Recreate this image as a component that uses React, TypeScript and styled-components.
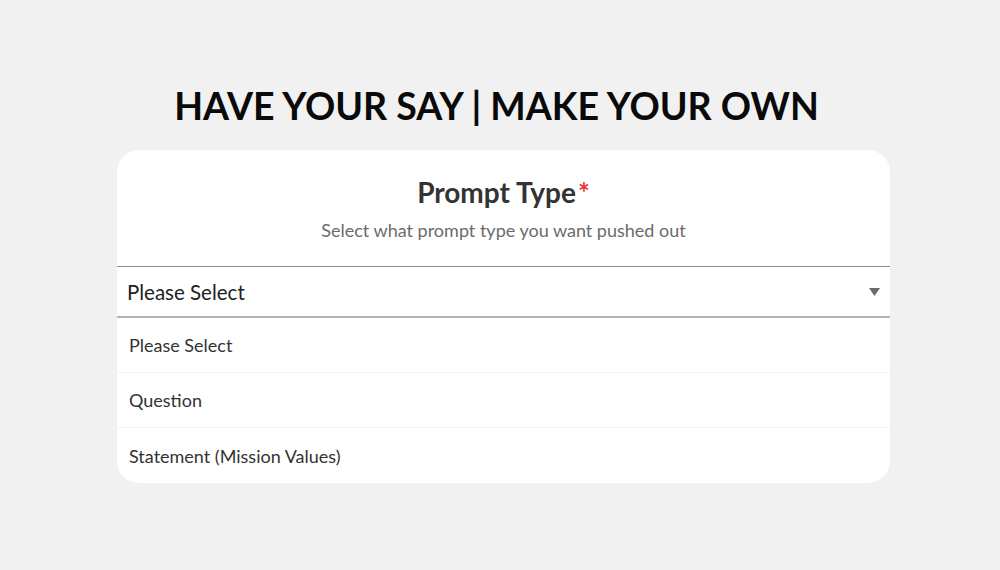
import React from 'react';
import styled, { createGlobalStyle } from 'styled-components';

const GlobalStyle = createGlobalStyle`
  html, body {
    margin: 0;
    padding: 0;
    background: #f1f1f1;
    font-family: Lato, "Open Sans", sans-serif;
  }
`;

const Page = styled.div`
  width: 1000px;
  height: 570px;
  display: flex;
  flex-direction: column;
  align-items: center;
  padding-top: 84px;
  box-sizing: border-box;
`;

const Heading = styled.h1`
  margin: 0 7px 22px 0;
  font-family: Lato, sans-serif;
  font-size: 37.5px;
  font-weight: 700;
  letter-spacing: 0;
  line-height: 44px;
  color: #0a0a0a;
`;

const Card = styled.div`
  width: 773px;
  margin-left: 7px;
  background: #ffffff;
  border-radius: 22px;
  overflow: hidden;
`;

const CardHead = styled.div`
  display: flex;
  flex-direction: column;
  align-items: center;
  padding: 24px 0 24px;
`;

const Label = styled.div`
  font-size: 28px;
  font-weight: 700;
  color: #333333;
  line-height: 36px;
`;

const Required = styled.span`
  color: #e53935;
  margin-left: 2px;
`;

const Hint = styled.div`
  margin-top: 8px;
  font-size: 18px;
  color: #6b6b6b;
  line-height: 24px;
`;

const Select = styled.div`
  display: flex;
  align-items: center;
  justify-content: space-between;
  height: 49px;
  padding: 0 10px;
  border-top: 1px solid #8c8c8c;
  border-bottom: 2px solid #b3b3b3;
  font-size: 20.5px;
  color: #222222;
`;

const Arrow = styled.svg`
  width: 11px;
  height: 8px;
`;

const Option = styled.div<{ $last?: boolean }>`
  height: 55px;
  box-sizing: border-box;
  display: flex;
  align-items: center;
  padding: 0 12px;
  font-size: 18px;
  color: #333333;
  border-bottom: ${p => (p.$last ? 'none' : '1px solid #f3f3f3')};
`;

const options = ['Please Select', 'Question', 'Statement (Mission Values)'];

const App: React.FC = () => {
  return (
    <>
      <GlobalStyle />
      <Page>
        <Heading>HAVE YOUR SAY | MAKE YOUR OWN</Heading>
        <Card>
          <CardHead>
            <Label>
              Prompt Type<Required>*</Required>
            </Label>
            <Hint>Select what prompt type you want pushed out</Hint>
          </CardHead>
          <Select>
            <span>Please Select</span>
            <Arrow viewBox="0 0 11 8">
              <path d="M0 0 H11 L5.5 8 Z" fill="#6b6b6b" />
            </Arrow>
          </Select>
          {options.map((o, i) => (
            <Option key={o} $last={i === options.length - 1}>
              {o}
            </Option>
          ))}
        </Card>
      </Page>
    </>
  );
};

export default App;
